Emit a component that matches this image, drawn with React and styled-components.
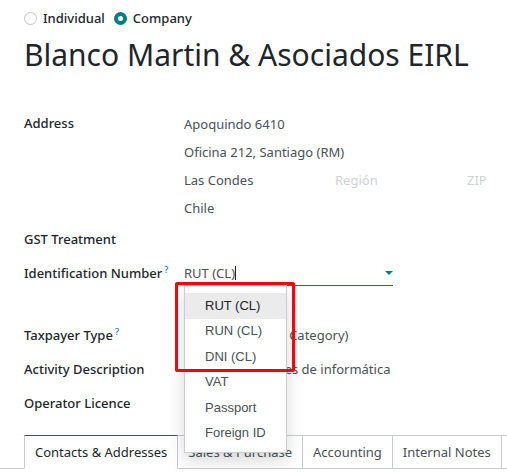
import React, { useState } from "react";
import styled, { createGlobalStyle } from "styled-components";

const GlobalStyle = createGlobalStyle`
  *, *::before, *::after { box-sizing: border-box; }
  body {
    margin: 0;
    background: #fff;
    color: #21252b;
    font: 13px/18px "Noto Sans", "Open Sans", sans-serif;
    overflow-x: hidden;
  }
`;

const Page = styled.main`
  padding-top: 9px;
  overflow: hidden;
`;

const Header = styled.header`
  padding: 0 24px;
`;

const TypeGroup = styled.div`
  display: flex;
  gap: 9px;
`;

const RadioLabel = styled.label`
  display: flex;
  align-items: center;
  gap: 6px;
  font-weight: 500;
`;

const Radio = styled.input`
  appearance: none;
  width: 13px;
  height: 13px;
  margin: 0;
  border: 1px solid #c3c6cb;
  border-radius: 50%;
  background: #fff;

  &:checked {
    border: 4px solid #017e84;
  }
`;

const Title = styled.h1`
  margin: 6px 0 33px;
  font-size: 30px;
  line-height: 44px;
  font-weight: 400;
  white-space: nowrap;
`;

const Form = styled.form`
  padding-left: 24px;
`;

const Row = styled.div`
  display: grid;
  grid-template-columns: 160px minmax(0, 1fr);
  min-height: ${(p) => (p.$tall ? "62px" : "34px")};
  align-items: start;
`;

const Label = styled.label`
  font-weight: 500;
  line-height: ${(p) => (p.$compact ? "26px" : "34px")};
  white-space: nowrap;
`;

const Help = styled.sup`
  margin-left: 2px;
  color: #0180a5;
  font-size: 9px;
  line-height: 1;
`;

const AddressRow = styled(Row)`
  min-height: 112px;
`;

const AddressFields = styled.div`
  display: grid;
  grid-template-columns: 151fr 132fr 40fr;
`;

const Field = styled.input`
  width: 100%;
  min-width: 0;
  height: ${(p) => (p.$address ? "28px" : "34px")};
  grid-column: ${(p) => (p.$full ? "1 / -1" : "auto")};
  padding: 0;
  border: 0;
  outline: 0;
  background: transparent;
  color: #495057;
  font: inherit;

  &::placeholder {
    color: #ced1d8;
    opacity: 1;
  }
`;

const Combo = styled.div`
  position: relative;
  max-width: 209px;
`;

const ComboBox = styled.div`
  display: flex;
  align-items: center;
  height: 30px;
  padding-top: 5px;
  border-bottom: 1px solid #017e84;
`;

const ComboValue = styled.input`
  field-sizing: content;
  padding: 0;
  border: 0;
  outline: 0;
  background: transparent;
  color: #495057;
  font: inherit;
`;

const Caret = styled.span`
  width: 1px;
  height: 14px;
  background: #21252b;
`;

const Toggle = styled.button`
  display: flex;
  margin-left: auto;
  padding: 0;
  border: 0;
  background: none;
`;

const Menu = styled.ul`
  position: absolute;
  z-index: 2;
  top: 29px;
  left: 0;
  display: grid;
  grid-auto-rows: 1fr;
  width: 103px;
  height: 168px;
  margin: 0;
  padding: 7px 0 6px;
  border: 1px solid #c9ccd2;
  background: #fff;
  box-shadow: 0 8px 16px rgba(0, 0, 0, 0.15);
  list-style: none;
`;

const Option = styled.li`
  display: flex;
  align-items: center;
  padding-left: 20px;
  background: ${(p) => (p.$active ? "#ebebeb" : "transparent")};
  color: ${(p) => (p.$active ? "#21252b" : "#495057")};
  font-family: "Liberation Sans", Arial, sans-serif;
`;

const Highlight = styled.div`
  position: absolute;
  z-index: 3;
  top: 26px;
  left: -9px;
  width: 120px;
  height: 90px;
  border: 3px solid #fb0207;
  border-radius: 2px;
  pointer-events: none;
`;

const Tabs = styled.nav`
  display: flex;
  margin-top: 15px;

  &::before {
    content: "";
    flex: 0 0 24px;
    border-bottom: 1px solid #c9ccd2;
  }
`;

const Tab = styled.button`
  flex: none;
  height: 34px;
  padding: 0 10px;
  border: 1px solid #c9ccd2;
  border-left-width: ${(p) => (p.$active ? "1px" : "0")};
  border-top-color: ${(p) => (p.$active ? "#64435a" : "#c9ccd2")};
  border-bottom-color: ${(p) => (p.$active ? "transparent" : "#c9ccd2")};
  background: #fff;
  color: ${(p) => (p.$active ? "#21252b" : "#495057")};
  font: inherit;
  white-space: nowrap;
`;

const TabFiller = styled.div`
  flex: 1;
  border: solid #c9ccd2;
  border-width: 1px 0;
`;

const OPTIONS = ["RUT (CL)", "RUN (CL)", "DNI (CL)", "VAT", "Passport", "Foreign ID"];
const TABS = ["Contacts & Addresses", "Sales & Purchase", "Accounting", "Internal Notes"];

export default function App() {
  const [kind, setKind] = useState("Company");
  const [tab, setTab] = useState(TABS[0]);

  return (
    <Page>
      <GlobalStyle />
      <Header>
        <TypeGroup role="radiogroup" aria-label="Contact type">
          {["Individual", "Company"].map((k) => (
            <RadioLabel key={k}>
              <Radio type="radio" name="kind" checked={kind === k} onChange={() => setKind(k)} />
              {k}
            </RadioLabel>
          ))}
        </TypeGroup>
        <Title>Blanco Martin &amp; Asociados EIRL</Title>
      </Header>

      <Form>
        <AddressRow>
          <Label htmlFor="street" $compact>Address</Label>
          <AddressFields>
            <Field id="street" $address $full defaultValue="Apoquindo 6410" />
            <Field aria-label="Street 2" $address $full defaultValue="Oficina 212, Santiago (RM)" />
            <Field aria-label="City" $address defaultValue="Las Condes" />
            <Field aria-label="Región" $address placeholder="Región" />
            <Field aria-label="ZIP" $address placeholder="ZIP" />
            <Field aria-label="Country" $address $full defaultValue="Chile" />
          </AddressFields>
        </AddressRow>
        <Row>
          <Label htmlFor="gst">GST Treatment</Label>
          <Field id="gst" />
        </Row>
        <Row $tall>
          <Label htmlFor="idnum">
            Identification Number<Help>?</Help>
          </Label>
          <Combo>
            <ComboBox>
              <ComboValue id="idnum" role="combobox" aria-expanded="true" aria-controls="idtypes" defaultValue="RUT (CL)" />
              <Caret />
              <Toggle type="button" aria-label="Show options">
                <svg width="8" height="4" viewBox="0 0 8 4" aria-hidden="true">
                  <path d="M0 0H8L4 4Z" fill="#017e84" />
                </svg>
              </Toggle>
            </ComboBox>
            <Menu id="idtypes" role="listbox">
              {OPTIONS.map((o, i) => (
                <Option key={o} role="option" aria-selected={i === 0} $active={i === 0}>{o}</Option>
              ))}
            </Menu>
            <Highlight />
          </Combo>
        </Row>
        <Row>
          <Label htmlFor="taxpayer">
            Taxpayer Type<Help>?</Help>
          </Label>
          <Field id="taxpayer" defaultValue="VAT Affected (1st Category)" />
        </Row>
        <Row>
          <Label htmlFor="activity">Activity Description</Label>
          <Field id="activity" defaultValue="Ciertas actividades de informática" />
        </Row>
        <Row>
          <Label htmlFor="licence">Operator Licence</Label>
          <Field id="licence" />
        </Row>
      </Form>

      <Tabs role="tablist">
        {TABS.map((name) => (
          <Tab key={name} type="button" role="tab" aria-selected={tab === name} $active={tab === name} onClick={() => setTab(name)}>
            {name}
          </Tab>
        ))}
        <TabFiller />
      </Tabs>
    </Page>
  );
}
